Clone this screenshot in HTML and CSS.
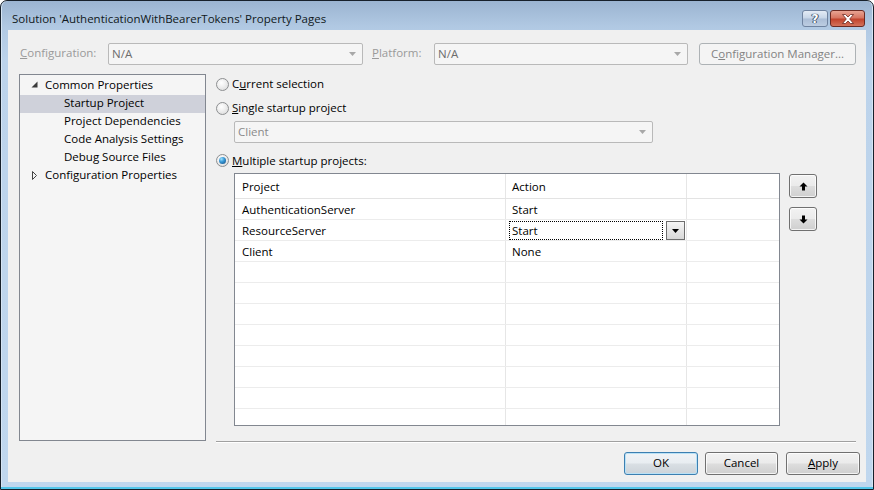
FILE: index.html
```html
<!DOCTYPE html>
<html>
<head>
<meta charset="utf-8">
<title>Property Pages</title>
<link rel="stylesheet" href="styles.css">
</head>
<body>
<div class="window">
  <div class="titlebar">
    <span class="title">Solution 'AuthenticationWithBearerTokens' Property Pages</span>
    <div class="caption-buttons">
      <div class="cap-btn cap-help">?</div>
      <div class="cap-btn cap-close">
        <svg width="12" height="10" viewBox="0 0 12 10"><path d="M0.5 0.5 H3.5 L6 3 L8.5 0.5 H11.5 L7.7 5 L11.5 9.5 H8.5 L6 7 L3.5 9.5 H0.5 L4.3 5 Z" fill="#fff" stroke="#6b2a22" stroke-width="0.8"/></svg>
      </div>
    </div>
  </div>

  <div class="client">
    <div class="toolbar">
      <span class="tb-label lbl-config"><u>C</u>onfiguration:</span>
      <div class="combo combo-config">
        <span class="combo-text">N/A</span>
        <svg class="combo-arrow" width="7" height="4" viewBox="0 0 7 4"><path d="M0 0 H7 L3.5 4 Z" fill="#a8a8a8"/></svg>
      </div>
      <span class="tb-label lbl-platform"><u>P</u>latform:</span>
      <div class="combo combo-platform">
        <span class="combo-text">N/A</span>
        <svg class="combo-arrow" width="7" height="4" viewBox="0 0 7 4"><path d="M0 0 H7 L3.5 4 Z" fill="#a8a8a8"/></svg>
      </div>
      <div class="btn btn-disabled btn-cm">C<u>o</u>nfiguration Manager...</div>
    </div>

    <div class="main">
      <div class="tree">
        <div class="tree-row top-row">
          <svg class="expander" width="7" height="7" viewBox="0 0 7 7"><path d="M6.5 0.5 V6.5 H0.5 Z" fill="#3b3b3b"/></svg>
          <span>Common Properties</span>
        </div>
        <div class="tree-row child-row selected"><span>Startup Project</span></div>
        <div class="tree-row child-row"><span>Project Dependencies</span></div>
        <div class="tree-row child-row"><span>Code Analysis Settings</span></div>
        <div class="tree-row child-row"><span>Debug Source Files</span></div>
        <div class="tree-row top-row">
          <svg class="expander collapsed" width="7" height="9" viewBox="0 0 7 9"><path d="M1.5 0.5 L5.5 4.5 L1.5 8.5 Z" fill="none" stroke="#444" stroke-width="1"/></svg>
          <span>Configuration Properties</span>
        </div>
      </div>

      <div class="content">
        <div class="radio-row first">
          <span class="radio"></span>
          <span class="radio-label">C<u>u</u>rrent selection</span>
        </div>
        <div class="radio-row second">
          <span class="radio"></span>
          <span class="radio-label"><u>S</u>ingle startup project</span>
        </div>
        <div class="combo combo-client">
          <span class="combo-text">Client</span>
          <svg class="combo-arrow" width="7" height="4" viewBox="0 0 7 4"><path d="M0 0 H7 L3.5 4 Z" fill="#a8a8a8"/></svg>
        </div>
        <div class="radio-row third">
          <span class="radio checked"></span>
          <span class="radio-label"><u>M</u>ultiple startup projects:</span>
        </div>

        <div class="grid-area">
          <div class="grid">
            <div class="grid-row header">
              <div class="cell c1">Project</div>
              <div class="cell c2">Action</div>
              <div class="cell c3"></div>
            </div>
            <div class="grid-row">
              <div class="cell c1">AuthenticationServer</div>
              <div class="cell c2">Start</div>
              <div class="cell c3"></div>
            </div>
            <div class="grid-row">
              <div class="cell c1">ResourceServer</div>
              <div class="cell c2 editing">
                <div class="edit-box">Start</div>
                <div class="edit-drop">
                  <svg width="7" height="4" viewBox="0 0 7 4"><path d="M0 0 H7 L3.5 4 Z" fill="#000"/></svg>
                </div>
              </div>
              <div class="cell c3"></div>
            </div>
            <div class="grid-row">
              <div class="cell c1">Client</div>
              <div class="cell c2">None</div>
              <div class="cell c3"></div>
            </div>
            <div class="grid-row"><div class="cell c1"></div><div class="cell c2"></div><div class="cell c3"></div></div>
            <div class="grid-row"><div class="cell c1"></div><div class="cell c2"></div><div class="cell c3"></div></div>
            <div class="grid-row"><div class="cell c1"></div><div class="cell c2"></div><div class="cell c3"></div></div>
            <div class="grid-row"><div class="cell c1"></div><div class="cell c2"></div><div class="cell c3"></div></div>
            <div class="grid-row"><div class="cell c1"></div><div class="cell c2"></div><div class="cell c3"></div></div>
            <div class="grid-row"><div class="cell c1"></div><div class="cell c2"></div><div class="cell c3"></div></div>
            <div class="grid-row"><div class="cell c1"></div><div class="cell c2"></div><div class="cell c3"></div></div>
            <div class="grid-row"><div class="cell c1"></div><div class="cell c2"></div><div class="cell c3"></div></div>
          </div>
          <div class="updown">
            <div class="btn btn-move up">
              <svg width="9" height="9" viewBox="0 0 9 9"><path d="M4.5 0.5 L8.5 4.5 H6 V8.5 H3 V4.5 H0.5 Z" fill="#000"/></svg>
            </div>
            <div class="btn btn-move down">
              <svg width="9" height="9" viewBox="0 0 9 9"><path d="M4.5 8.5 L8.5 4.5 H6 V0.5 H3 V4.5 H0.5 Z" fill="#000"/></svg>
            </div>
          </div>
        </div>

        <div class="separator"></div>
      </div>
    </div>

    <div class="footer">
      <div class="btn btn-default btn-ok">OK</div>
      <div class="btn btn-cancel">Cancel</div>
      <div class="btn btn-apply"><u>A</u>pply</div>
    </div>
  </div>
</div>
</body>
</html>
```

FILE: styles.css
```css
* { box-sizing: border-box; }

html, body {
  margin: 0;
  padding: 0;
}

body {
  width: 874px;
  height: 490px;
  overflow: hidden;
  background: #ffffff;
  font-family: "Open Sans", "Noto Sans", "DejaVu Sans", sans-serif;
  font-size: 11.5px;
  color: #000;
}

u { text-decoration: underline; text-underline-offset: 1px; }

.window {
  width: 874px;
  height: 490px;
  border: 1px solid #17202b;
  border-radius: 7px 7px 0 0;
  background: linear-gradient(to bottom, #9bb4d1 0px, #b1c9e3 26px, #bcd3eb 60px, #c0d7ee 100%);
  box-shadow: inset 0 -2px 0 #52c6ea, inset 1px 0 0 #d6e5f4, inset -1px 0 0 #d6e5f4;
  padding: 0 7px 7px 7px;
  display: flex;
  flex-direction: column;
}

/* Title bar */
.titlebar {
  height: 29px;
  margin: 0 -7px;
  padding: 0 8px 0 11px;
  display: flex;
  justify-content: space-between;
  align-items: flex-start;
}

.title {
  padding-top: 10px;
  line-height: 16px;
  font-size: 11.5px;
  color: #101820;
}

.caption-buttons {
  display: flex;
  margin-top: 9px;
  gap: 2px;
}

.cap-btn {
  height: 17px;
  border-radius: 3px;
  display: flex;
  align-items: center;
  justify-content: center;
}

.cap-help {
  width: 26px;
  border: 1px solid #6f83a0;
  background: linear-gradient(to bottom, #e3ebf5 0%, #c6d5e7 48%, #aabdd6 52%, #bccde2 100%);
  color: #fff;
  font-family: "DejaVu Sans", sans-serif;
  font-weight: bold;
  font-size: 12px;
  text-shadow: 0 0 1px #2e3e57, 0 0 1px #2e3e57, 1px 0 0 #4b5d78, -1px 0 0 #4b5d78;
}

.cap-close {
  width: 35px;
  border: 1px solid #6b2a22;
  background: linear-gradient(to bottom, #e8a493 0%, #d77662 45%, #c2442d 55%, #d4735c 100%);
}

/* Client area */
.client {
  height: 452px;
  background: #f0f0f0;
  padding-top: 13px;
  display: flex;
  flex-direction: column;
}

/* Toolbar */
.toolbar {
  height: 22px;
  padding-left: 12px;
  display: flex;
  align-items: center;
}

.tb-label {
  color: #9a9a9a;
  padding-bottom: 3px;
}

.lbl-config { width: 88px; }
.lbl-platform { width: 62px; margin-left: 9px; }

.combo {
  height: 22px;
  border: 1px solid #b9b9b9;
  border-radius: 2px;
  background: #f5f5f5;
  display: flex;
  align-items: center;
  padding-left: 3px;
  color: #6d6d6d;
}

.combo-text { flex: 1; padding-bottom: 2px; }

.combo-arrow { margin-right: 6px; }

.combo-config { width: 255px; }
.combo-platform { width: 254px; }

.btn {
  height: 23px;
  border: 1px solid #707070;
  border-radius: 3px;
  background: linear-gradient(to bottom, #f2f2f2 0%, #ebebeb 48%, #dddddd 52%, #cfcfcf 100%);
  box-shadow: inset 0 0 0 1px rgba(255,255,255,0.75);
  display: flex;
  align-items: center;
  justify-content: center;
  padding-bottom: 2px;
  color: #000;
}

.btn-disabled {
  border-color: #adb2b5;
  background: #f4f4f4;
  box-shadow: none;
  color: #838383;
}

.btn-cm {
  width: 157px;
  height: 22px;
  margin-left: 11px;
}

/* Main area */
.main {
  margin-top: 9px;
  height: 369px;
  padding: 0 10px 0 11px;
  display: flex;
}

.tree {
  width: 187px;
  height: 367px;
  border: 1px solid #828790;
  background: #f5f5f5;
  padding-top: 2px;
}

.tree-row {
  height: 18px;
  display: flex;
  align-items: center;
  padding-bottom: 3px;
  white-space: nowrap;
}

.top-row { padding-left: 11px; }
.top-row .expander { width: 7px; margin-right: 7px; flex: none; }
.top-row .expander.collapsed { margin-top: 1px; }

.child-row { padding-left: 44px; }

.tree-row.selected { background: #cfd1da; }

.content {
  flex: 1;
  margin-left: 10px;
  display: flex;
  flex-direction: column;
}

.radio-row {
  height: 20px;
  display: flex;
  align-items: center;
}

.radio-row.second { margin-top: 4px; }
.radio-row.third { margin-top: 7px; }

.radio {
  position: relative;
  width: 13px;
  height: 13px;
  border-radius: 50%;
  border: 1px solid #8d8f91;
  background: radial-gradient(circle at 40% 35%, #ffffff 0%, #f0f0f0 40%, #d6d6d6 100%);
  flex: none;
}

.radio.checked::after {
  content: "";
  position: absolute;
  left: 2px;
  top: 2px;
  width: 7px;
  height: 7px;
  border-radius: 50%;
  background: radial-gradient(circle at 35% 30%, #9fe3ff 0%, #3a9ad8 40%, #124a7e 100%);
}

.radio-label { margin-left: 3px; padding-bottom: 2px; }
.radio-row.third .radio-label { padding-bottom: 0; }

.combo-client {
  width: 419px;
  margin: 3px 0 0 18px;
  color: #8a8a8a;
}

/* Grid */
.grid-area {
  margin-top: 3px;
  padding-left: 18px;
  display: flex;
  align-items: flex-start;
}

.grid {
  width: 546px;
  height: 253px;
  border: 1px solid #828790;
  background: #ffffff;
  overflow: hidden;
}

.grid-row {
  height: 21px;
  display: flex;
  border-bottom: 1px solid #ececec;
}

.grid-row.header {
  height: 25px;
  border-bottom: 1px solid #e3e3e3;
}

.cell {
  height: 100%;
  display: flex;
  align-items: center;
  border-right: 1px solid #e6e6e6;
  white-space: nowrap;
}

.c1 { width: 271px; padding-left: 7px; }
.c2 { width: 181px; padding-left: 6px; }
.c3 { flex: 1; border-right: none; }

.cell.editing {
  padding-left: 3px;
  align-items: flex-end;
}

.edit-box {
  width: 154px;
  height: 19px;
  border: 1px dotted #000;
  padding-left: 2px;
  display: flex;
  align-items: center;
}

.edit-drop {
  width: 19px;
  height: 19px;
  margin-left: 3px;
  border: 1px solid #6e6e6e;
  background: linear-gradient(to bottom, #f6f6f6 0%, #e6e6e6 50%, #d8d8d8 100%);
  display: flex;
  align-items: center;
  justify-content: center;
}

.updown {
  margin-left: 9px;
  padding-top: 1px;
  display: flex;
  flex-direction: column;
}

.btn-move {
  width: 28px;
  height: 24px;
  padding-bottom: 0;
}

.btn-move.down { margin-top: 9px; }

.separator {
  margin-top: auto;
  height: 2px;
  border-top: 1px solid #a0a0a0;
  border-bottom: 1px solid #ffffff;
}

/* Footer */
.footer {
  margin-top: 9px;
  height: 23px;
  padding-right: 6px;
  display: flex;
  justify-content: flex-end;
}

.btn-ok { width: 74px; }
.btn-cancel { width: 73px; margin-left: 7px; }
.btn-apply { width: 74px; margin-left: 8px; }

.btn-default {
  border-color: #3c7fb1;
  box-shadow: inset 0 0 0 1px #b9e1f6;
  background: linear-gradient(to bottom, #f0f3f6 0%, #e8edf1 48%, #d9dfe4 52%, #ccd3d9 100%);
}
```
